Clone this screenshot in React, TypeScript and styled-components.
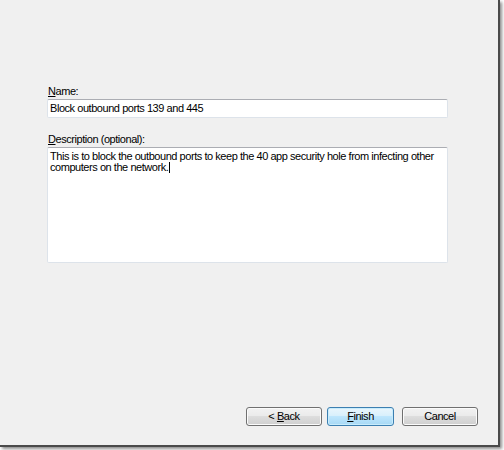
import React from "react";
import styled, { createGlobalStyle } from "styled-components";

const Global = createGlobalStyle`
  html, body { margin: 0; padding: 0; background: #ffffff; }
  body { font-family: "Liberation Sans", Arial, sans-serif; }
`;

const Page = styled.div`
  width: 504px;
  height: 450px;
  background: #ffffff;
  overflow: hidden;
`;

const Frame = styled.div`
  box-sizing: border-box;
  width: 500px;
  height: 447px;
  background: #f0f0f0;
  border-right: 2px solid #4a4a4a;
  border-bottom: 2px solid #4a4a4a;
  box-shadow: 2px 2px 3px rgba(0, 0, 0, 0.45);
  display: flex;
  flex-direction: column;
  padding: 85px 0 0 47px;
  font-size: 11px;
  letter-spacing: -0.45px;
  color: #000;
`;

const Label = styled.div`
  height: 13px;
  line-height: 13px;
  margin-bottom: 1px;
  padding-left: 1px;
`;

const Key = styled.span`
  text-decoration: underline;
  text-underline-offset: 1px;
`;

const Field = styled.div<{ $height: number; $multi?: boolean }>`
  box-sizing: border-box;
  width: 401px;
  height: ${(p) => p.$height}px;
  background: #ffffff;
  border: 1px solid #dde3ea;
  border-top-color: #abadb3;
  border-radius: 2px;
  padding: ${(p) => (p.$multi ? "3px 6px 0 2px" : "2px 0 0 2px")};
  line-height: ${(p) => (p.$multi ? 11 : 12)}px;
  margin-bottom: ${(p) => (p.$multi ? 0 : 15)}px;
`;

const Caret = styled.span`
  display: inline-block;
  width: 1px;
  height: 11px;
  background: #000;
  vertical-align: -2px;
  margin-left: 1px;
`;

const Spacer = styled.div`
  flex: 1;
`;

const ButtonRow = styled.div`
  display: flex;
  justify-content: flex-end;
  gap: 5px;
  padding-right: 20px;
  margin-bottom: 19px;
`;

const Button = styled.div<{ $primary?: boolean; $width: number; $gap?: number }>`
  box-sizing: border-box;
  width: ${(p) => p.$width}px;
  height: 19px;
  margin-right: ${(p) => p.$gap ?? 0}px;
  border-radius: 3px;
  border: 1px solid ${(p) => (p.$primary ? "#3c7fb1" : "#707070")};
  background: ${(p) =>
    p.$primary
      ? "linear-gradient(#eaf6fd 0%, #d9f0fc 45%, #bee6fd 50%, #a7d9f5 100%)"
      : "linear-gradient(#f2f2f2 0%, #ebebeb 45%, #dddddd 50%, #cfcfcf 100%)"};
  box-shadow: inset 0 0 0 1px ${(p) => (p.$primary ? "#c8ecfc" : "#fbfbfb")};
  display: flex;
  align-items: center;
  justify-content: center;
  font-size: 11px;
  line-height: 1;
  white-space: pre;
`;

export default function App() {
  return (
    <Page>
      <Global />
      <Frame>
        <Label>
          <Key>N</Key>ame:
        </Label>
        <Field $height={19}>Block outbound ports 139 and 445</Field>
        <Label>
          <Key>D</Key>escription (optional):
        </Label>
        <Field $height={116} $multi>
          This is to block the outbound ports to keep the 40 app security hole from infecting other
          computers on the network.
          <Caret />
        </Field>
        <Spacer />
        <ButtonRow>
          <Button $width={76}>
            {"< "}
            <Key>B</Key>ack
          </Button>
          <Button $primary $width={67} $gap={3}>
            <Key>F</Key>inish
          </Button>
          <Button $width={76}>Cancel</Button>
        </ButtonRow>
      </Frame>
    </Page>
  );
}
